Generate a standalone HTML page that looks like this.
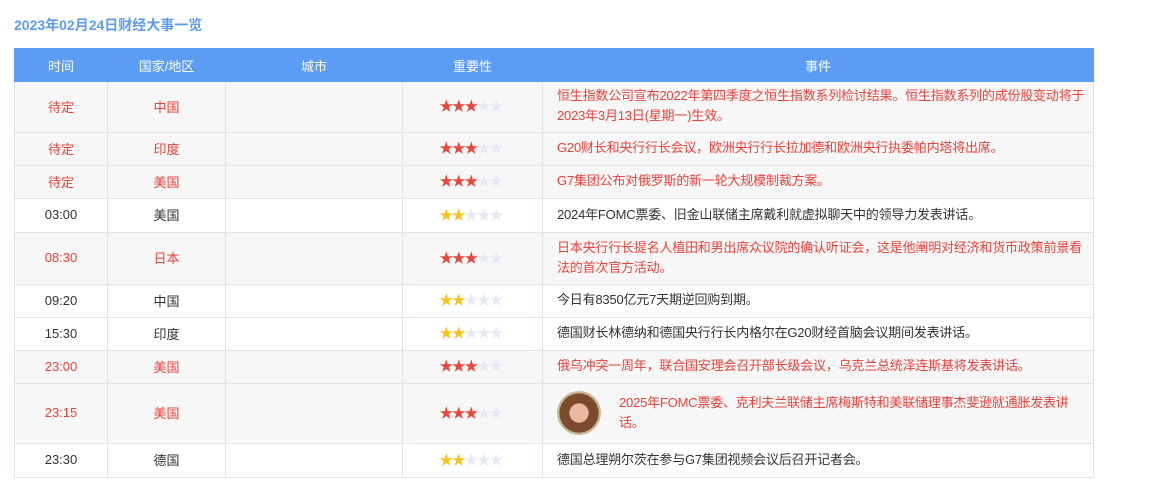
<!DOCTYPE html>
<html><head><meta charset="utf-8"><style>
body{margin:0;background:#fff;font-family:"Liberation Sans","Noto Sans CJK SC",sans-serif;font-size:13px;color:#333;}
h1{position:absolute;left:14px;top:15px;margin:0;font-size:14px;font-weight:bold;color:#5b9cf2;}
table{position:absolute;left:14px;top:48px;border-collapse:collapse;width:1080px;table-layout:fixed;}
th{background:#5b9cf5;color:#fff;font-weight:normal;height:32px;padding:0;border:1px solid #5b9cf5;}
td{border:1px solid #e0e3e8;text-align:center;padding:0 0 2px 0;}
td.e{text-align:left;padding:0 6px 2px 14px;line-height:20px;letter-spacing:-0.2px;}
tr.r td{background:#f7f7f7;color:#e8423a;}
.s{font-size:14px;letter-spacing:-1.5px;padding-right:4px;}
.s b{font-weight:normal;color:#e8483c}
.s i{font-style:normal;color:#e5e9f2}
.s u{text-decoration:none;color:#f8c41b}
.av{display:inline-block;width:44px;height:44px;border-radius:50%;background:radial-gradient(circle at 50% 50%,#e8b9a0 0 30%,#7a4a2a 32% 62%,#c9b79a 64%);vertical-align:middle;margin-right:18px;}
</style></head><body>
<h1>2023年02月24日财经大事一览</h1>
<table>
<colgroup><col style="width:93px"><col style="width:118px"><col style="width:177px"><col style="width:140px"><col></colgroup>
<tr><th>时间</th><th>国家/地区</th><th>城市</th><th>重要性</th><th>事件</th></tr>
<tr class="r" style="height:51px"><td>待定</td><td>中国</td><td></td><td class="s"><b>★★★</b><i>★★</i></td><td class="e">恒生指数公司宣布2022年第四季度之恒生指数系列检讨结果。恒生指数系列的成份股变动将于2023年3月13日(星期一)生效。</td></tr>
<tr class="r" style="height:33px"><td>待定</td><td>印度</td><td></td><td class="s"><b>★★★</b><i>★★</i></td><td class="e">G20财长和央行行长会议，欧洲央行行长拉加德和欧洲央行执委帕内塔将出席。</td></tr>
<tr class="r" style="height:33px"><td>待定</td><td>美国</td><td></td><td class="s"><b>★★★</b><i>★★</i></td><td class="e">G7集团公布对俄罗斯的新一轮大规模制裁方案。</td></tr>
<tr style="height:34px"><td>03:00</td><td>美国</td><td></td><td class="s"><u>★★</u><i>★★★</i></td><td class="e">2024年FOMC票委、旧金山联储主席戴利就虚拟聊天中的领导力发表讲话。</td></tr>
<tr class="r" style="height:52px"><td>08:30</td><td>日本</td><td></td><td class="s"><b>★★★</b><i>★★</i></td><td class="e">日本央行行长提名人植田和男出席众议院的确认听证会，这是他阐明对经济和货币政策前景看法的首次官方活动。</td></tr>
<tr style="height:33px"><td>09:20</td><td>中国</td><td></td><td class="s"><u>★★</u><i>★★★</i></td><td class="e">今日有8350亿元7天期逆回购到期。</td></tr>
<tr style="height:33px"><td>15:30</td><td>印度</td><td></td><td class="s"><u>★★</u><i>★★★</i></td><td class="e">德国财长林德纳和德国央行行长内格尔在G20财经首脑会议期间发表讲话。</td></tr>
<tr class="r" style="height:33px"><td>23:00</td><td>美国</td><td></td><td class="s"><b>★★★</b><i>★★</i></td><td class="e">俄乌冲突一周年，联合国安理会召开部长级会议，乌克兰总统泽连斯基将发表讲话。</td></tr>
<tr class="r" style="height:60px"><td>23:15</td><td>美国</td><td></td><td class="s"><b>★★★</b><i>★★</i></td><td class="e"><div style="display:flex;align-items:center"><span class="av"></span><span style="flex:1">2025年FOMC票委、克利夫兰联储主席梅斯特和美联储理事杰斐逊就通胀发表讲话。</span></div></td></tr>
<tr style="height:34px"><td>23:30</td><td>德国</td><td></td><td class="s"><u>★★</u><i>★★★</i></td><td class="e">德国总理朔尔茨在参与G7集团视频会议后召开记者会。</td></tr>
</table>
</body></html>
